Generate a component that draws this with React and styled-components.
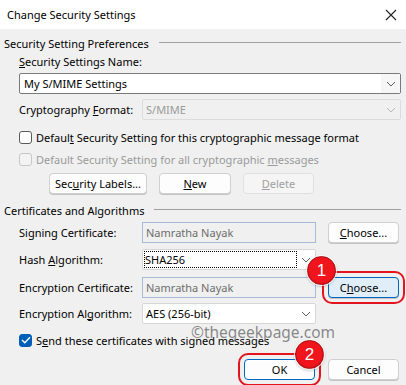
import React from "react";
import styled, { createGlobalStyle } from "styled-components";

const GlobalStyle = createGlobalStyle`
  html, body {
    margin: 0;
    padding: 0;
    background: #f0f0f0;
  }
  body {
    font-family: "Noto Sans", "Open Sans", sans-serif;
    font-size: 11px;
    color: #000;
  }
`;

function Chevron({ color = "#606060" }) {
  return (
    <svg width="10" height="6" viewBox="0 0 10 6">
      <path d="M1 1 L5 5 L9 1" fill="none" stroke={color} strokeWidth="1" />
    </svg>
  );
}

function App() {
  return (
    <>
      <GlobalStyle />
      <Window>
        <TitleBar>
          <span>Change Security Settings</span>
          <svg width="12" height="12" viewBox="0 0 12 12">
            <path d="M1 1 L11 11 M11 1 L1 11" stroke="#222" strokeWidth="1.1" />
          </svg>
        </TitleBar>
        <Body>
          <GroupHeader>Security Setting Preferences</GroupHeader>
          <Indent>
            <Label $mt={3}>
              <u>S</u>ecurity Settings Name:
            </Label>
            <Combo $editable $mt={3}>
              <span>My S/MIME Settings</span>
              <ArrowBox $editable>
                <Chevron />
              </ArrowBox>
            </Combo>
            <FieldRow $mt={5} $wide>
              <Label>
                Cryptography <u>F</u>ormat:
              </Label>
              <Combo $disabled>
                <span>S/MIME</span>
                <ArrowBox>
                  <Chevron color="#b8b8b8" />
                </ArrowBox>
              </Combo>
            </FieldRow>
            <CheckRow $mt={9}>
              <CheckBox />
              <span>
                Defaul<u>t</u> Security Setting for this cryptographic message format
              </span>
            </CheckRow>
            <CheckRow $mt={6} $disabled>
              <CheckBox $disabled />
              <span>
                Default Security Setting for all cryptographic <u>m</u>essages
              </span>
            </CheckRow>
            <ButtonRow $mt={6}>
              <Button $w={98}>
                Sec<u>u</u>rity Labels...
              </Button>
              <Button $w={72}>
                <u>N</u>ew
              </Button>
              <Button $w={71} $disabled>
                <u>D</u>elete
              </Button>
            </ButtonRow>
          </Indent>

          <GroupHeader $mt={8}>Certificates and Algorithms</GroupHeader>
          <Indent>
            <FieldRow $mt={4}>
              <Label>Signing Certificate:</Label>
              <TextBox>Namratha Nayak</TextBox>
              <Button>
                <u>C</u>hoose...
              </Button>
            </FieldRow>
            <FieldRow $mt={6}>
              <Label>
                Hash <u>A</u>lgorithm:
              </Label>
              <Combo $plain>
                <FocusText>SHA256</FocusText>
                <ArrowBox $plain>
                  <Chevron />
                </ArrowBox>
              </Combo>
            </FieldRow>
            <FieldRow $mt={7}>
              <Label>Encryption Certificate:</Label>
              <TextBox>Namratha Nayak</TextBox>
              <Marked>
                <Button $hover $callout>
                  C<u>h</u>oose...
                </Button>
                <Badge $x={-21} $y={-21}>1</Badge>
              </Marked>
            </FieldRow>
            <FieldRow $mt={5}>
              <Label>
                Encryption Al<u>g</u>orithm:
              </Label>
              <Combo $plain>
                <span>AES (256-bit)</span>
                <ArrowBox $plain>
                  <Chevron />
                </ArrowBox>
              </Combo>
            </FieldRow>
            <CheckRow $mt={8}>
              <CheckBox $checked>
                <svg width="10" height="8" viewBox="0 0 10 8">
                  <path d="M1 4 L3.8 6.8 L9 1.2" fill="none" stroke="#fff" strokeWidth="1.3" />
                </svg>
              </CheckBox>
              <span>
                S<u>e</u>nd these certificates with signed messages
              </span>
            </CheckRow>
          </Indent>
          <Footer>
            <Marked>
              <Button $default $callout>OK</Button>
              <Badge $x={51} $y={-19}>2</Badge>
            </Marked>
            <Button>Cancel</Button>
          </Footer>
        </Body>
        <Watermark>©thegeekpage.com</Watermark>
      </Window>
    </>
  );
}

const Window = styled.div`
  position: relative;
  width: 406px;
  height: 385px;
  overflow: hidden;
  display: flex;
  flex-direction: column;
  background: #f0f0f0;
`;

const TitleBar = styled.div`
  height: 29px;
  flex-shrink: 0;
  background: #fff;
  display: flex;
  align-items: center;
  justify-content: space-between;
  padding: 0 9px 0 7px;
  font-size: 11px;
`;

const Body = styled.div`
  display: flex;
  flex-direction: column;
  padding: 6px 5px 0 4px;
`;

const GroupHeader = styled.div`
  display: flex;
  align-items: center;
  gap: 10px;
  height: 16px;
  margin-top: ${(p) => p.$mt || 0}px;
  white-space: nowrap;
  &::after {
    content: "";
    flex: 1;
    border-top: 1px solid #a0a0a0;
    margin-top: -2px;
  }
`;

const Indent = styled.div`
  display: flex;
  flex-direction: column;
  padding-left: 15px;
`;

const Label = styled.div`
  height: 16px;
  line-height: 16px;
  white-space: nowrap;
  margin-top: ${(p) => p.$mt || 0}px;
`;

const FieldRow = styled.div`
  display: grid;
  grid-template-columns: 111px ${(p) => (p.$wide ? "259px" : "174px 71px")};
  column-gap: 12px;
  align-items: center;
  margin-top: ${(p) => p.$mt || 0}px;
`;

const Combo = styled.div`
  height: 21px;
  box-sizing: border-box;
  margin-top: ${(p) => p.$mt || 0}px;
  display: flex;
  align-items: center;
  padding-left: ${(p) => (p.$editable ? 4 : 3)}px;
  border: 1px solid
    ${(p) => (p.$editable ? "#7a7a7a" : p.$disabled ? "#dcdcdc" : "#d6d6d6")};
  border-radius: 2px;
  background: ${(p) => (p.$disabled ? "#f0f0f0" : "#fff")};
  color: ${(p) => (p.$disabled ? "#9a9a9a" : "#000")};
  span {
    flex: 1;
  }
`;

const ArrowBox = styled.div`
  width: ${(p) => (p.$editable ? 19 : 18)}px;
  height: 100%;
  display: flex;
  align-items: center;
  justify-content: center;
  background: ${(p) => (p.$editable ? "#f6f6f6" : "transparent")};
`;

const FocusText = styled.span`
  flex: 1;
  height: 17px;
  line-height: 17px;
  padding-left: 1px;
  margin-left: -2px;
  outline: 1px dotted #000;
  outline-offset: -1px;
`;

const TextBox = styled.div`
  height: 21px;
  box-sizing: border-box;
  border: 1px solid #a5bbd6;
  background: #f0f0f0;
  color: #6d6d6d;
  padding-left: 3px;
  display: flex;
  align-items: center;
`;

const CheckRow = styled.div`
  display: flex;
  align-items: center;
  gap: 4px;
  height: 16px;
  margin-top: ${(p) => p.$mt || 0}px;
  color: ${(p) => (p.$disabled ? "#9a9a9a" : "#000")};
  white-space: nowrap;
`;

const CheckBox = styled.div`
  width: 13px;
  height: 13px;
  box-sizing: border-box;
  border-radius: 3px;
  display: flex;
  align-items: center;
  justify-content: center;
  border: 1px solid ${(p) => (p.$checked ? "#005fb8" : p.$disabled ? "#c8c8c8" : "#5a5a5a")};
  background: ${(p) => (p.$checked ? "#005fb8" : p.$disabled ? "#f3f3f3" : "#fff")};
`;

const ButtonRow = styled.div`
  display: flex;
  gap: 12px;
  padding-left: 30px;
  margin-top: ${(p) => p.$mt || 0}px;
`;

const Button = styled.div`
  width: ${(p) => p.$w || 71}px;
  height: 21px;
  box-sizing: border-box;
  display: flex;
  align-items: center;
  justify-content: center;
  border-radius: 4px;
  white-space: nowrap;
  border: 1px solid
    ${(p) =>
      p.$hover ? "#0067c0" : p.$default ? "#0067c0" : p.$disabled ? "#e0e0e0" : "#d0d0d0"};
  background: ${(p) => (p.$hover ? "#e0eef9" : p.$disabled ? "#f5f5f5" : "#fdfdfd")};
  color: ${(p) => (p.$disabled ? "#a0a0a0" : "#000")};
  box-shadow: ${(p) =>
    p.$default ? "inset 0 0 0 1px #fff" : p.$disabled ? "none" : "0 1px 0 #c4c4c4"};
  outline: ${(p) => (p.$callout ? "2px solid #e3141e" : "none")};
  outline-offset: 4px;
`;

const Marked = styled.div`
  position: relative;
  width: fit-content;
`;

const Badge = styled.div`
  position: absolute;
  left: ${(p) => p.$x}px;
  top: ${(p) => p.$y}px;
  width: 29px;
  height: 29px;
  box-sizing: border-box;
  border-radius: 50%;
  background: radial-gradient(circle at 50% 45%, #f0141c 60%, #c10c12 100%);
  border: 1px solid #a80a10;
  box-shadow: 0 0 0 1px rgba(255, 255, 255, 0.8), 0 1px 3px rgba(0, 0, 0, 0.35);
  color: #fff;
  font-family: "Liberation Sans", Arial, sans-serif;
  font-size: 17px;
  display: flex;
  align-items: center;
  justify-content: center;
`;

const Footer = styled.div`
  display: flex;
  justify-content: flex-end;
  gap: 13px;
  margin-top: 11px;
  padding-right: 2px;
`;

const Watermark = styled.div`
  position: absolute;
  left: 191px;
  top: 321px;
  font-family: "Noto Sans", sans-serif;
  font-size: 15.5px;
  color: rgba(100, 100, 100, 0.75);
  pointer-events: none;
`;

export default App;
